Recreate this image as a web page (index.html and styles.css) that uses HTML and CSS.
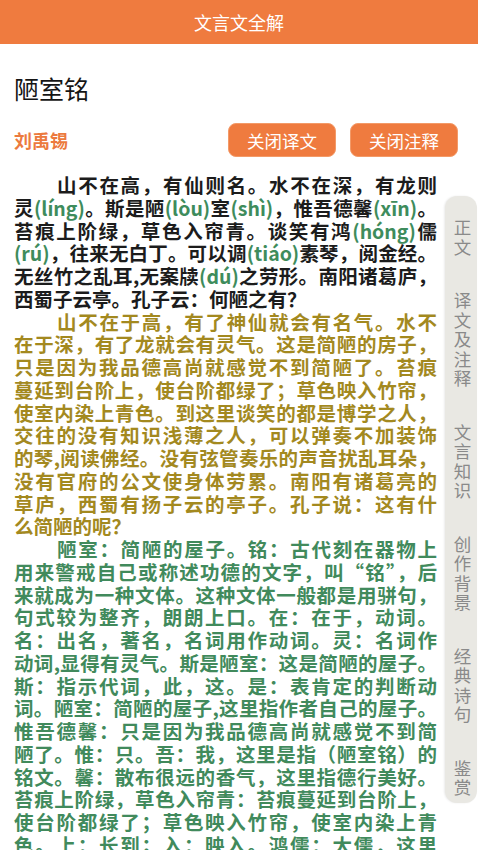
FILE: index.html
```html
<!DOCTYPE html>
<html lang="zh-CN">
<head>
<meta charset="utf-8">
<title>文言文全解</title>
<link rel="stylesheet" href="styles.css">
</head>
<body>
<header class="topbar">文言文全解</header>
<main class="page">
  <h1 class="title">陋室铭</h1>
  <div class="meta">
    <span class="author">刘禹锡</span>
    <div class="actions">
      <button class="btn">关闭译文</button>
      <button class="btn">关闭注释</button>
    </div>
  </div>
  <article class="content">
    <p class="para original">
      <span class="ln first">山不在高，有仙则名。水不在深，有龙则</span>
      <span class="ln">灵<i class="py">(líng)</i>。斯是陋<i class="py">(lòu)</i>室<i class="py">(shì)</i>，惟吾德馨<i class="py">(xīn)</i>。</span>
      <span class="ln">苔痕上阶绿，草色入帘青。谈笑有鸿<i class="py">(hóng)</i>儒</span>
      <span class="ln"><i class="py">(rú)</i>，往来无白丁。可以调<i class="py">(tiáo)</i>素琴，阅金经。</span>
      <span class="ln">无丝竹之乱耳,无案牍<i class="py">(dú)</i>之劳形。南阳诸葛庐，</span>
      <span class="ln end">西蜀子云亭。孔子云：何陋之有？</span>
    </p>
    <p class="para translation">
      <span class="ln first">山不在于高，有了神仙就会有名气。水不</span>
      <span class="ln">在于深，有了龙就会有灵气。这是简陋的房子，</span>
      <span class="ln">只是因为我品德高尚就感觉不到简陋了。苔痕</span>
      <span class="ln">蔓延到台阶上，使台阶都绿了；草色映入竹帘，</span>
      <span class="ln">使室内染上青色。到这里谈笑的都是博学之人，</span>
      <span class="ln">交往的没有知识浅薄之人，可以弹奏不加装饰</span>
      <span class="ln">的琴,阅读佛经。没有弦管奏乐的声音扰乱耳朵，</span>
      <span class="ln">没有官府的公文使身体劳累。南阳有诸葛亮的</span>
      <span class="ln">草庐，西蜀有扬子云的亭子。孔子说：这有什</span>
      <span class="ln end">么简陋的呢？</span>
    </p>
    <p class="para notes">
      <span class="ln first">陋室：简陋的屋子。铭：古代刻在器物上</span>
      <span class="ln">用来警戒自己或称述功德的文字，叫“铭”，后</span>
      <span class="ln">来就成为一种文体。这种文体一般都是用骈句，</span>
      <span class="ln">句式较为整齐，朗朗上口。在：在于，动词。</span>
      <span class="ln">名：出名，著名，名词用作动词。灵：名词作</span>
      <span class="ln">动词,显得有灵气。斯是陋室：这是简陋的屋子。</span>
      <span class="ln">斯：指示代词，此，这。是：表肯定的判断动</span>
      <span class="ln">词。陋室：简陋的屋子,这里指作者自己的屋子。</span>
      <span class="ln">惟吾德馨：只是因为我品德高尚就感觉不到简</span>
      <span class="ln">陋了。惟：只。吾：我，这里是指（陋室铭）的</span>
      <span class="ln">铭文。馨：散布很远的香气，这里指德行美好。</span>
      <span class="ln">苔痕上阶绿，草色入帘青：苔痕蔓延到台阶上，</span>
      <span class="ln">使台阶都绿了；草色映入竹帘，使室内染上青</span>
      <span class="ln">色。上：长到；入：映入。鸿儒：大儒，这里</span>
      <span class="ln end">指博学的人。</span>
    </p>
  </article>
</main>
<nav class="sidetabs">
  <span class="tab">正文</span>
  <span class="tab">译文及注释</span>
  <span class="tab">文言知识</span>
  <span class="tab">创作背景</span>
  <span class="tab">经典诗句</span>
  <span class="tab">鉴赏</span>
</nav>
</body>
</html>
```
FILE: styles.css
```css
html, body {
  margin: 0;
  padding: 0;
  background: #ffffff;
}
body {
  font-family: "Noto Sans CJK SC", "Noto Sans", sans-serif;
  color: #1c1c1c;
  width: 478px;
  height: 850px;
  overflow: hidden;
  position: relative;
}
.topbar {
  height: 44px;
  line-height: 44px;
  background: #ef7b3f;
  color: #ffffff;
  font-size: 18px;
  text-align: center;
}
.page {
  padding-left: 14px;
}
.title {
  margin: 29px 0 0 0;
  font-size: 25px;
  line-height: 30px;
  font-weight: 400;
  color: #151515;
}
.meta {
  margin-top: 20px;
  padding-right: 20px;
  height: 34px;
  display: flex;
  align-items: center;
  justify-content: space-between;
}
.author {
  font-size: 18px;
  font-weight: 700;
  color: #ec7a3e;
}
.actions {
  display: flex;
  gap: 14px;
}
.btn {
  width: 108px;
  height: 34px;
  border: 1px solid #f39a68;
  border-radius: 8px;
  background: #ef7b3f;
  color: #ffffff;
  font-family: inherit;
  font-size: 17.5px;
  padding: 0;
}
.content {
  margin-top: 17px;
  width: 423px;
}
.para {
  margin: 0;
  font-size: 19.5px;
  line-height: 22.75px;
  font-weight: 700;
}
.ln {
  display: block;
  height: 22.75px;
  text-align: justify;
  text-align-last: justify;
  white-space: nowrap;
}
.ln.first {
  text-indent: 43px;
}
.ln.end {
  text-align: left;
  text-align-last: left;
}
.original {
  color: #1c1c1c;
}
.py {
  font-style: normal;
  color: #3e8c5c;
}
.translation {
  color: #a3891f;
}
.notes {
  color: #418a5c;
}
.sidetabs {
  position: absolute;
  top: 196px;
  left: 445px;
  width: 32px;
  height: 607px;
  box-sizing: border-box;
  padding: 21px 0 6px 0;
  background: #e9e8e3;
  border-radius: 12px;
  box-shadow: -1px 0 2px rgba(0, 0, 0, 0.08);
  display: flex;
  flex-direction: column;
  align-items: center;
  gap: 34px;
}
.tab {
  display: block;
  width: 18px;
  font-size: 17.5px;
  line-height: 19.5px;
  color: #8a8a8a;
  text-align: center;
  margin-left: 3px;
}
```
